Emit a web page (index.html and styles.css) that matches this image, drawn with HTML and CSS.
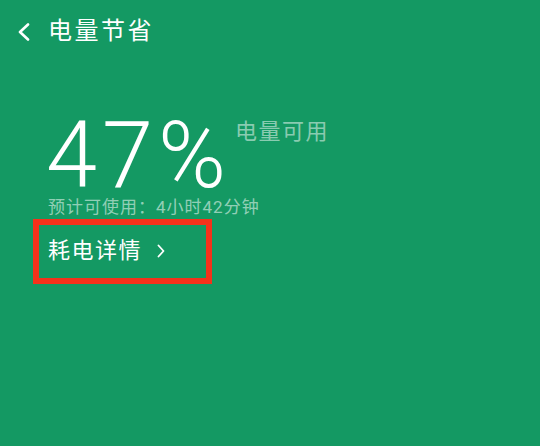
FILE: index.html
```html
<!DOCTYPE html>
<html lang="zh">
<head>
<meta charset="utf-8">
<link rel="stylesheet" href="styles.css">
</head>
<body>
<div class="screen">
  <header class="topbar">
    <svg class="back" width="14" height="18" viewBox="0 0 14 18"><path d="M11 1.5 L3 9 L11 16.5" fill="none" stroke="#fff" stroke-width="2.6" stroke-linecap="round" stroke-linejoin="round"/></svg>
    <h1 class="title">电量节省</h1>
  </header>
  <main class="main">
    <div class="hero">
      <span class="pct">47%</span>
      <span class="avail">电量可用</span>
    </div>
    <p class="estimate">预计可使用：4小时42分钟</p>
    <a class="details">耗电详情<svg class="chev" width="8" height="14" viewBox="0 0 8 14"><path d="M1.5 1.5 L6.5 7 L1.5 12.5" fill="none" stroke="#fff" stroke-width="1.8" stroke-linecap="round" stroke-linejoin="round"/></svg></a>
  </main>
</div>
</body>
</html>
```
FILE: styles.css
```css
html, body {
  margin: 0;
  padding: 0;
}
body {
  width: 540px;
  height: 446px;
  background: #149963;
  font-family: Roboto, "Noto Sans CJK SC", sans-serif;
  color: #fff;
  overflow: hidden;
}
.topbar {
  display: flex;
  align-items: center;
  height: 64px;
  padding-left: 17px;
}
.back {
  display: block;
  margin-right: 17px;
}
.title {
  margin: 0;
  font-size: 24px;
  font-weight: 400;
  letter-spacing: 2.5px;
  line-height: 1;
  margin-top: -2px;
}
.main {
  padding-left: 48px;
  padding-top: 57px;
}
.hero {
  display: flex;
  align-items: flex-start;
}
.pct {
  font-family: Roboto, sans-serif;
  font-weight: 300;
  font-size: 92px;
  line-height: 70px;
  margin-left: -2px;
  letter-spacing: 5px;
}
.avail {
  font-size: 22px;
  line-height: 1;
  letter-spacing: 1.5px;
  color: rgba(255, 255, 255, 0.5);
  margin-left: 4px;
  margin-top: 0;
}
.estimate {
  margin: 7px 0 0;
  font-size: 17px;
  line-height: 18px;
  letter-spacing: 1px;
  color: rgba(255, 255, 255, 0.55);
}
.details {
  display: flex;
  align-items: center;
  box-sizing: border-box;
  width: 179px;
  height: 65px;
  margin-left: -15px;
  margin-top: 3px;
  padding-left: 9px;
  padding-bottom: 2px;
  border: 6px solid #f4321b;
  font-size: 22px;
  letter-spacing: 1.5px;
  line-height: 1;
}
.chev {
  display: block;
  margin-left: 15px;
}
```
